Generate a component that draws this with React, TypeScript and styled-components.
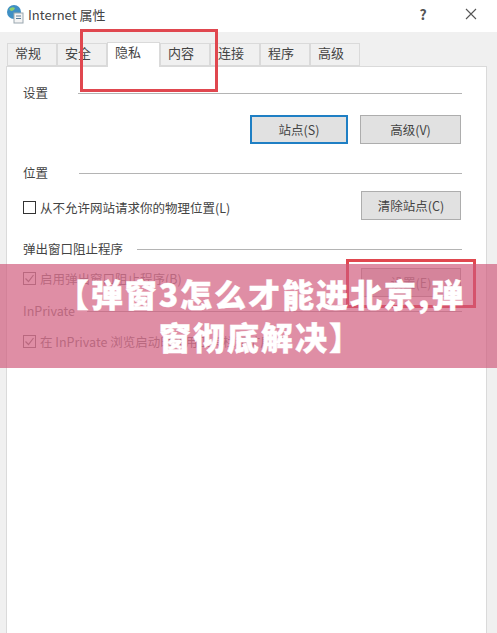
import * as React from 'react';
import styled, { createGlobalStyle } from 'styled-components';

const GlobalStyle = createGlobalStyle`
    html, body {
        margin: 0;
        padding: 0;
        background: #f0f0f0;
    }
    body {
        font-family: "Noto Sans CJK SC", "Liberation Sans", sans-serif;
        color: #333;
    }
`;

const Page = styled.div`
    position: relative;
    width: 497px;
    height: 633px;
    overflow: hidden;
    display: flex;
    flex-direction: column;
    background: #f0f0f0;
`;

const TitleBar = styled.div`
    height: 32px;
    flex: none;
    box-sizing: border-box;
    display: flex;
    align-items: center;
    padding: 0 18px 4px 6px;
    background: #fff;
    font-size: 13px;
    color: #444;
`;
const TitleText = styled.div`
    margin-left: 4px;
    flex: 1;
`;
const TitleButton = styled.div`
    width: 16px;
    display: flex;
    justify-content: center;
    font-size: 14px;
    font-weight: 700;
    margin-left: 32px;
    color: #555;
`;

const TabStrip = styled.div`
    flex: none;
    height: 34px;
    padding: 9px 0 0 7px;
    box-sizing: border-box;
    display: flex;
    align-items: flex-end;
`;
const Tab = styled.div<{ $active?: boolean }>`
    box-sizing: border-box;
    width: ${p => (p.$active ? 53 : 50)}px;
    height: ${p => (p.$active ? 25 : 23)}px;
    margin-bottom: ${p => (p.$active ? -1 : 0)}px;
    padding-left: 7px;
    position: relative;
    z-index: ${p => (p.$active ? 1 : 0)};
    background: ${p => (p.$active ? '#fff' : '#f0f0f0')};
    border: 1px solid #dadada;
    border-bottom: ${p => (p.$active ? 'none' : '1px solid #dadada')};
    font-size: 13px;
    line-height: 18px;
    color: #444;
`;

const Panel = styled.div`
    flex: 1;
    margin: 0 10px 0 6px;
    padding: 15px 24px 0 16px;
    background: #fff;
    border: 1px solid #dadada;
    border-bottom: none;
`;

const GroupHead = styled.div<{ $muted?: boolean; $top?: number }>`
    display: flex;
    align-items: center;
    height: 20px;
    margin-top: ${p => p.$top ?? 0}px;
    font-size: 12.5px;
    color: ${p => (p.$muted ? '#888' : '#444')};
`;
const HeadRule = styled.div<{ $gap: number }>`
    flex: 1;
    height: 1px;
    margin: 2px 0 0 ${p => p.$gap}px;
    background: #b4b4b4;
`;

const Row = styled.div<{ $top: number; $h: number }>`
    display: flex;
    align-items: center;
    justify-content: space-between;
    margin-top: ${p => p.$top}px;
    height: ${p => p.$h}px;
`;
const RightButtons = styled.div`
    display: flex;
    justify-content: flex-end;
    gap: 12px;
    width: 100%;
    padding-right: 1px;
`;
const Btn = styled.div<{ $w: number; $focus?: boolean; $muted?: boolean; $inset?: boolean }>`
    box-sizing: border-box;
    width: ${p => p.$w}px;
    height: 29px;
    margin-right: ${p => (p.$inset ? 1 : 0)}px;
    display: flex;
    align-items: center;
    justify-content: center;
    background: #e1e1e1;
    border: ${p => (p.$focus ? '2px solid #1f7fc4' : '1px solid #adadad')};
    font-size: 12.5px;
    color: ${p => (p.$muted ? '#8a8a8a' : '#444')};
`;

const CheckLabel = styled.div<{ $muted?: boolean; $raised?: boolean; $drop?: number }>`
    display: flex;
    align-items: center;
    align-self: ${p => (p.$raised ? 'flex-start' : 'center')};
    margin-top: ${p => (p.$raised ? 2 : p.$drop ?? 0)}px;
    font-size: 12.5px;
    color: ${p => (p.$muted ? '#8a8a8a' : '#444')};
`;
const Box = styled.span<{ $muted?: boolean }>`
    box-sizing: border-box;
    flex: none;
    width: 13px;
    height: 13px;
    margin-right: 4px;
    display: flex;
    border: 1px solid ${p => (p.$muted ? '#8a8a8a' : '#333')};
    background: #fff;
`;

const RedFrame = styled.div<{ $x: number; $y: number; $w: number; $h: number }>`
    position: absolute;
    left: ${p => p.$x}px;
    top: ${p => p.$y}px;
    width: ${p => p.$w}px;
    height: ${p => p.$h}px;
    box-sizing: border-box;
    border: 3px solid #e0474f;
`;

const Banner = styled.div`
    position: absolute;
    left: 0;
    right: 0;
    top: 264px;
    height: 104px;
    box-sizing: border-box;
    padding: 8px 25px 0 50px;
    background: rgba(208, 88, 122, 0.68);
    color: #fff;
    -webkit-text-stroke: 0.4px #fff;
    font-size: 32px;
    font-weight: 900;
    line-height: 43px;
    text-align: center;
    letter-spacing: 2px;
`;

const Tick = () => (
    <svg width="11" height="11" viewBox="0 0 11 11" fill="none">
        <path d="M1.5 5.5 L4.5 8.5 L9.5 2" stroke="#8a8a8a" strokeWidth="1.2" />
    </svg>
);

const InternetIcon = () => (
    <svg width="18" height="20" viewBox="0 0 18 20">
        <circle cx="8" cy="8" r="7" fill="#3f8fc4" />
        <path d="M3 5 Q6 2 9 4 Q8 7 5 7 Z M9 9 Q13 8 14 11 Q11 14 9 13 Z" fill="#8fd06a" />
        <rect x="8" y="9" width="9" height="10" fill="#f4f4f4" stroke="#9aa7b0" />
        <path d="M10 12h5M10 14.5h5" stroke="#5b7f9c" strokeWidth="1" />
    </svg>
);

const tabs = ['常规', '安全', '隐私', '内容', '连接', '程序', '高级'];

export default function App() {
    return (
        <Page>
            <GlobalStyle />
            <TitleBar>
                <InternetIcon />
                <TitleText>Internet 属性</TitleText>
                <TitleButton>?</TitleButton>
                <TitleButton>
                    <svg width="12" height="12" viewBox="0 0 12 12">
                        <path d="M1 1 L11 11 M11 1 L1 11" stroke="#555" strokeWidth="1.1" />
                    </svg>
                </TitleButton>
            </TitleBar>
            <TabStrip>
                {tabs.map(t => (
                    <Tab key={t} $active={t === '隐私'}>{t}</Tab>
                ))}
            </TabStrip>
            <Panel>
                <GroupHead>设置<HeadRule $gap={30} /></GroupHead>
                <Row $top={13} $h={29}>
                    <RightButtons>
                        <Btn $w={98} $focus>站点(S)</Btn>
                        <Btn $w={101}>高级(V)</Btn>
                    </RightButtons>
                </Row>
                <GroupHead $top={18}>位置<HeadRule $gap={31} /></GroupHead>
                <Row $top={9} $h={29}>
                    <CheckLabel $drop={4}><Box />从不允许网站请求你的物理位置(L)</CheckLabel>
                    <Btn $w={100} $inset>清除站点(C)</Btn>
                </Row>
                <GroupHead $top={18}>弹出窗口阻止程序<HeadRule $gap={14} /></GroupHead>
                <Row $top={9} $h={30}>
                    <CheckLabel $muted $raised><Box $muted><Tick /></Box>启用弹出窗口阻止程序(B)</CheckLabel>
                    <Btn $w={100} $muted $inset>设置(E)</Btn>
                </Row>
                <GroupHead $muted $top={3}>InPrivate<HeadRule $gap={12} /></GroupHead>
                <Row $top={11} $h={20}>
                    <CheckLabel $muted><Box $muted><Tick /></Box>在 InPrivate 浏览启动时禁用工具栏和扩展(T)</CheckLabel>
                </Row>
            </Panel>
            <RedFrame $x={80} $y={29} $w={138} $h={63} />
            <RedFrame $x={346} $y={259} $w={130} $h={49} />
            <Banner>【弹窗3怎么才能进北京,弹窗彻底解决】</Banner>
        </Page>
    );
}
